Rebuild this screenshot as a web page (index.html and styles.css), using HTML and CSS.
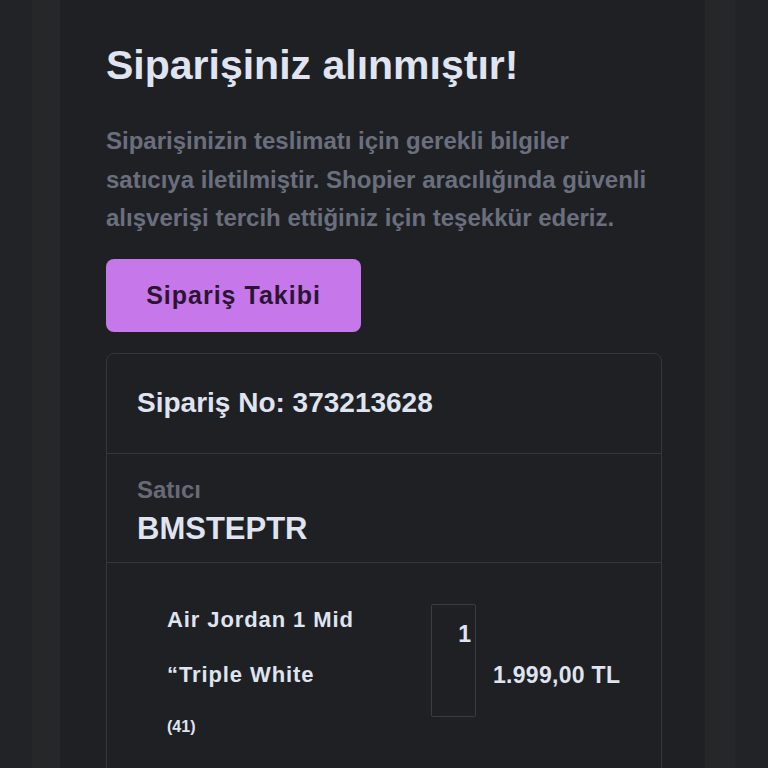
FILE: index.html
```html
<!DOCTYPE html>
<html lang="tr">

<head>
  <meta charset="UTF-8">
  <meta name="viewport" content="width=device-width, initial-scale=1.0">
  <title>Siparişiniz alınmıştır</title>
  <link rel="stylesheet" href="styles.css">
</head>

<body>
  <div class="frame">
    <div class="main">
      <h1 class="title">Siparişiniz alınmıştır!</h1>
      <p class="info">
        Siparişinizin teslimatı için gerekli bilgiler<br>
        satıcıya iletilmiştir. Shopier aracılığında güvenli<br>
        alışverişi tercih ettiğiniz için teşekkür ederiz.
      </p>
      <a class="button-takip" href="#">Sipariş Takibi</a>

      <div class="card">
        <div class="card-row">
          <div class="siparis-no">Sipariş No: 373213628</div>
        </div>
        <div class="card-row satici-row">
          <div class="label">Satıcı</div>
          <div class="satici">BMSTEPTR</div>
        </div>
        <div class="card-row urun-row">
          <div class="urun">
            <div class="urun-adi">Air Jordan 1 Mid</div>
            <div class="urun-adi">“Triple White</div>
            <div class="urun-beden">(41)</div>
          </div>
          <div class="adet">1</div>
          <div class="fiyat">1.999,00 TL</div>
        </div>
      </div>
    </div>
  </div>
</body>

</html>
```

FILE: styles.css
```css
body {
  box-sizing: border-box;
  font-family: "Liberation Sans", Arial, Helvetica, sans-serif;
  padding: 0px;
  margin: 0px;
  background-color: #222326;
  height: 768px;
  overflow: hidden;
}

.frame {
  margin: 0 33px 0 32px;
  padding: 0 30px 0 28px;
  background-color: #262729;
  height: 768px;
}

.main {
  background-color: #1f2024;
  height: 768px;
  padding: 42px 43px 0 46px;
}

.title {
  margin: 0;
  font-size: 41px;
  line-height: 46px;
  color: #dfe4f0;
  font-weight: bold;
}

.info {
  margin: 34px 0 0 0;
  font-size: 24px;
  line-height: 38.5px;
  color: #6a6f7e;
  font-weight: bold;
  white-space: nowrap;
}

.button-takip {
  display: flex;
  justify-content: center;
  align-items: center;
  width: 255px;
  height: 73px;
  margin-top: 21px;
  background-color: #c678ea;
  color: #2a1633;
  border-radius: 8px;
  font-size: 25px;
  letter-spacing: 1px;
  font-weight: bold;
  text-decoration: none;
}

.card {
  margin-top: 21px;
  border: solid 1px #35373c;
  border-radius: 8px;
}

.card-row {
  padding: 0 30px;
  border-bottom: solid 1px #35373c;
}

.card-row:last-child {
  border-bottom: none;
}

.siparis-no {
  height: 99px;
  display: flex;
  align-items: center;
  font-size: 28px;
  font-weight: bold;
  color: #dfe4f0;
}

.satici-row {
  height: 109px;
  padding-top: 22px;
  box-sizing: border-box;
}

.label {
  font-size: 24px;
  line-height: 28px;
  color: #676b78;
  font-weight: bold;
}

.satici {
  margin-top: 7px;
  font-size: 31px;
  line-height: 36px;
  color: #dfe4f0;
  font-weight: bold;
}

.urun-row {
  display: flex;
  padding: 41px 30px 30px 60px;
  height: 220px;
  box-sizing: border-box;
}

.urun {
  width: 264px;
  padding-top: 2px;
  color: #dfe4f0;
  font-weight: bold;
}

.urun-adi {
  font-size: 22px;
  line-height: 28px;
  letter-spacing: 0.9px;
  margin-bottom: 27px;
}

.urun-beden {
  margin-top: 7px;
  font-size: 16px;
  line-height: 22px;
}

.adet {
  width: 45px;
  height: 113px;
  box-sizing: border-box;
  border: solid 1px #3a3c41;
  border-radius: 2px;
  padding: 16px 4px 0 0;
  text-align: right;
  font-size: 23px;
  line-height: 26px;
  color: #dfe4f0;
  font-weight: bold;
}

.fiyat {
  margin: 58px 0 0 17px;
  font-size: 23px;
  letter-spacing: 0.3px;
  white-space: nowrap;
  color: #dfe4f0;
  font-weight: bold;
}
```
